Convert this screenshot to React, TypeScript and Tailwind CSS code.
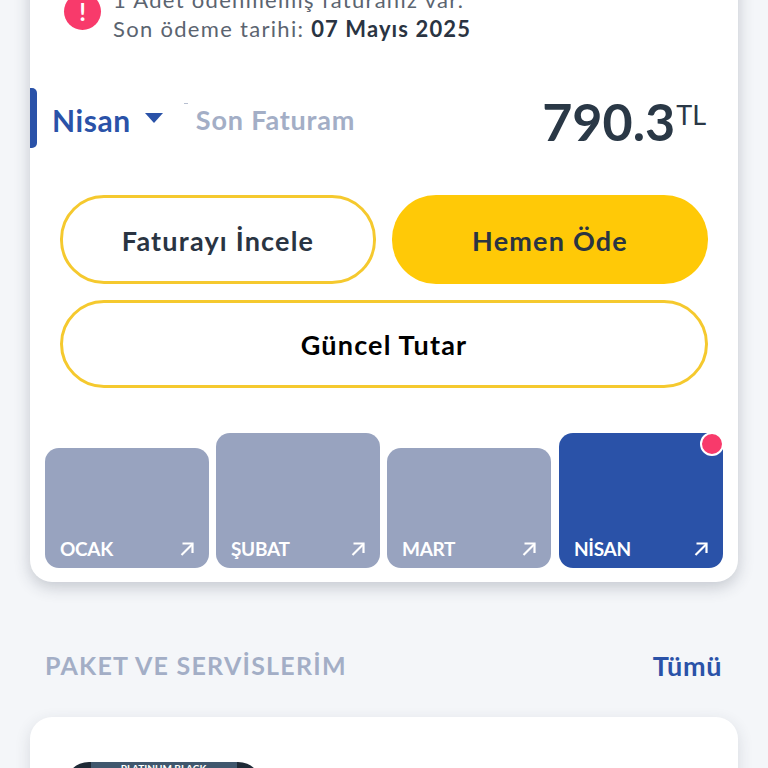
import React from "react";

const months = [
  { label: "OCAK", tall: false, active: false },
  { label: "ŞUBAT", tall: true, active: false },
  { label: "MART", tall: false, active: false },
  { label: "NİSAN", tall: true, active: true },
];

const ArrowIcon = () => (
  <svg width="16" height="16" viewBox="0 0 16 16" fill="none" stroke="white" strokeWidth="2.2">
    <path d="M2.5 14 L13.5 3" />
    <path d="M3.5 2.5 H13.5 V12" />
  </svg>
);

const App: React.FC = () => {
  return (
    <div className="h-[768px] w-[768px] overflow-hidden bg-[#f4f6f9] font-['Lato',sans-serif]">
      {/* Invoice card */}
      <div className="mx-[30px] -mt-[40px] h-[622px] rounded-[22px] bg-white shadow-[0_5px_16px_rgba(40,50,70,0.24)]">
        <div className="flex gap-3 pl-[34px] pt-[25px]">
          <div className="mt-[8px] flex h-[37px] w-[37px] shrink-0 items-center justify-center rounded-full bg-[#f83a6b] text-[24px] font-bold leading-none text-white">
            !
          </div>
          <div className="text-[22px] leading-[29px] tracking-[1.3px] text-[#5b6470]">
            <p>1 Adet ödenmemiş faturanız var.</p>
            <p>
              Son ödeme tarihi: <span className="font-bold tracking-[1.1px] text-[#2a3442]">07 Mayıs 2025</span>
            </p>
          </div>
        </div>

        <div className="relative mt-[45px] flex h-[60px] items-center">
          <div className="h-full w-[7px] rounded-r-[5px] bg-[#2a52a8]" />
          <span className="ml-[15px] pt-[5px] text-[30px] font-bold tracking-[0.6px] text-[#2a52a8]">Nisan</span>
          <svg className="ml-[14px]" width="18" height="10" viewBox="0 0 18 10" fill="#2a52a8">
            <path d="M0 0 H18 L9 10 Z" />
          </svg>
          <span className="absolute left-[154px] top-[15px] h-px w-[4px] bg-[#b7bfd0]" />
          <span className="ml-[33px] pt-[5px] text-[27px] font-bold tracking-[0.8px] text-[#a3aec6]">Son Faturam</span>
          <div className="ml-auto mr-8 flex items-start pt-[5px] text-[#2a3846]">
            <span className="text-[52px] font-bold leading-none">790.3</span>
            <span className="ml-[1px] mt-[6px] text-[27px] leading-none">TL</span>
          </div>
        </div>

        <div className="mt-[47px] grid grid-cols-2 gap-x-4 gap-y-4 px-[30px]">
          <button className="h-[89px] rounded-[44px] border-[3px] border-[#f5c92e] pt-[3px] text-[27px] font-bold tracking-[1.2px] text-[#2a3442]">
            Faturayı İncele
          </button>
          <button className="h-[89px] rounded-[44px] bg-[#ffc907] pt-[3px] text-[27px] font-bold tracking-[1.2px] text-[#2a3442]">
            Hemen Öde
          </button>
          <button className="col-span-2 h-[88px] rounded-[44px] border-[3px] border-[#f5c92e] pt-[3px] text-[27px] font-bold tracking-[1.2px] text-black">
            Güncel Tutar
          </button>
        </div>

        <div className="mt-[45px] flex h-[135px] items-end gap-[7px] px-[15px]">
          {months.map((m) => (
            <div
              key={m.label}
              className={`relative flex w-[164px] items-end justify-between rounded-[14px] pb-[7px] pl-[15px] pr-[14px] ${
                m.tall ? "h-[135px]" : "h-[120px]"
              } ${m.active ? "ml-px bg-[#2a52a8]" : "bg-[#98a3bf]"}`}
            >
              <span className="text-[19px] font-bold leading-[24px] tracking-[-0.3px] text-white">{m.label}</span>
              <span className="mb-[4px]">
                <ArrowIcon />
              </span>
              {m.active && (
                <span className="absolute -right-px -top-px h-[24px] w-[24px] rounded-full border-2 border-white bg-[#f83a6b]" />
              )}
            </div>
          ))}
        </div>
      </div>

      {/* Section header */}
      <div className="mt-[68px] flex h-[32px] items-center justify-between pl-[45px] pr-[46px]">
        <span className="text-[25px] font-bold tracking-[1.25px] text-[#a3aec6]">PAKET VE SERVİSLERİM</span>
        <span className="text-[27px] font-bold tracking-[0.6px] text-[#2a52a8]">Tümü</span>
      </div>

      {/* Packages card */}
      <div className="mx-[30px] mt-[35px] h-[200px] rounded-[22px] bg-white pl-[35px] pt-[45px] shadow-[0_5px_16px_rgba(40,50,70,0.14)]">
        <div className="flex h-[40px] w-[197px] justify-center overflow-hidden rounded-t-[24px] bg-[#1e2a36]">
          <div className="h-full w-[146px] bg-[#40576d] text-center text-[10px] font-bold leading-[12px] text-white">
            PLATINUM BLACK
          </div>
        </div>
      </div>
    </div>
  );
};

export default App;
